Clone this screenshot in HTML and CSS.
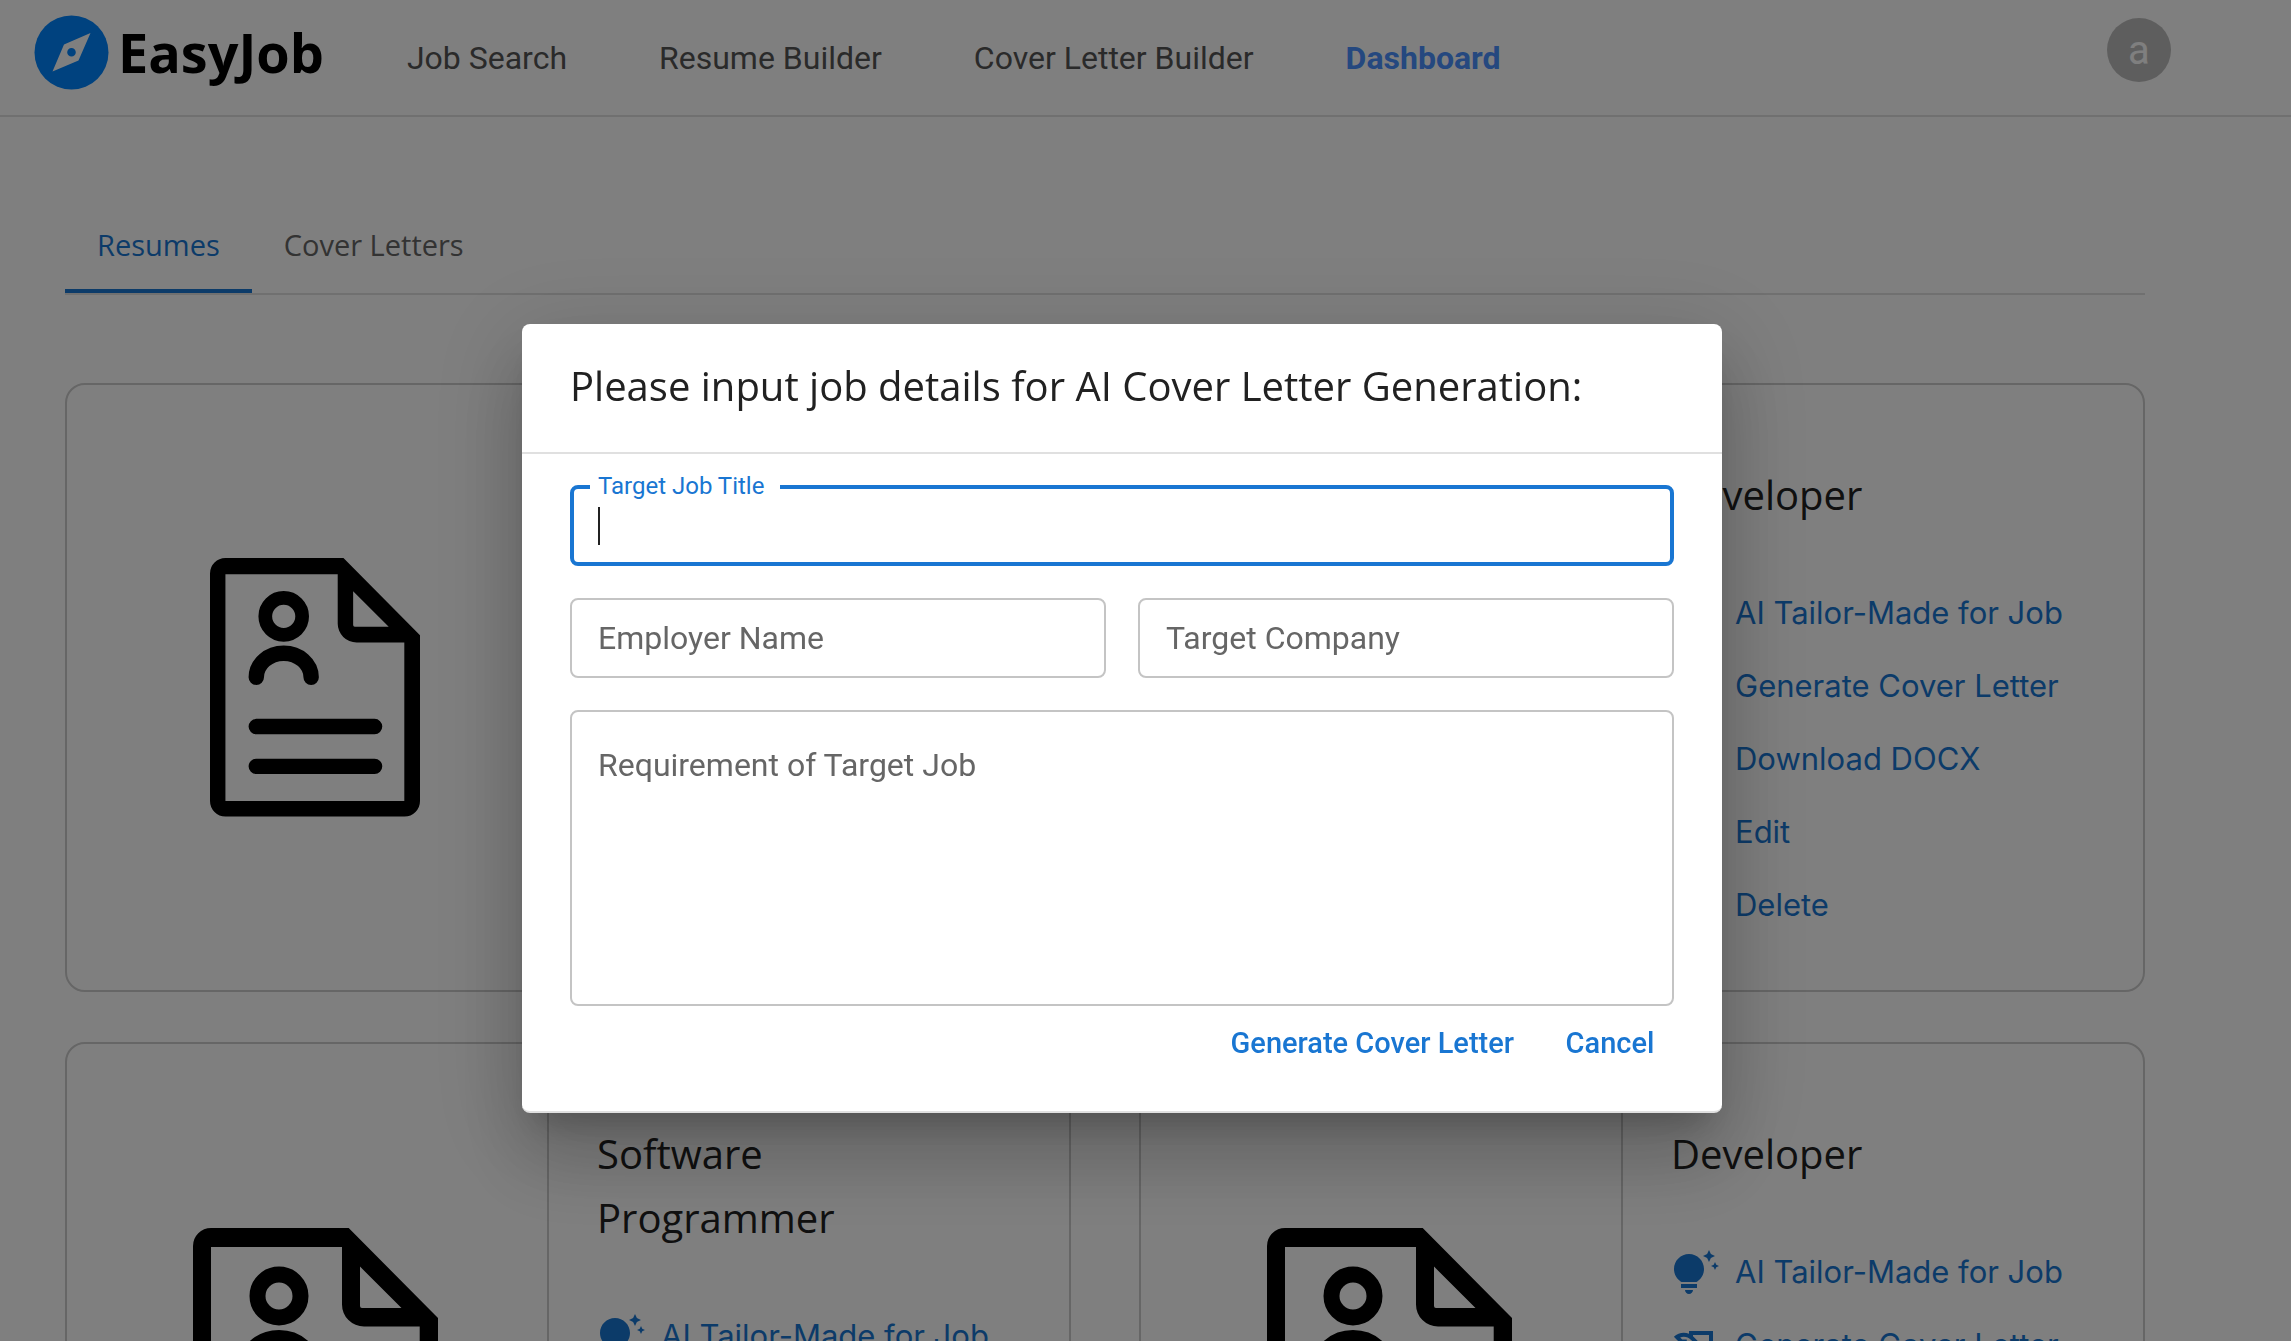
FILE: index.html
```html
<!DOCTYPE html>
<html lang="en">
<head>
  <meta charset="utf-8">
  <title>EasyJob - Dashboard</title>
  <link rel="stylesheet" href="styles.css">
</head>
<body>
  <svg class="sprite" aria-hidden="true">
    <symbol id="resume" viewBox="0 0 245 302">
      <path fill-rule="evenodd" d="M18 0H155.700L245 90V283.500A18 18 0 0 1 227 301.500H18A18 18 0 0 1 0 283.500V18A18 18 0 0 1 18 0ZM18 19V283.500H226.700V98.500H171A22 22 0 0 1 149 76.500V19ZM167 38.600V78Q167 80 169 80H208.500Z"/>
      <g fill="none" stroke="#000" stroke-linecap="round">
        <circle cx="86" cy="68" r="21.500" stroke-width="16"/>
        <path stroke-width="18" d="M54 139A32 28 0 0 1 118 139M54 196.600H192M54 243H192"/>
      </g>
    </symbol>
    <symbol id="tips" viewBox="0 0 24 24"><path d="M7 20h4c0 1.100-.9 2-2 2s-2-.9-2-2zm-2-1h8v-2H5v2zm11.500-9.500c0 3.820-2.660 5.860-3.770 6.500H5.270c-1.110-.64-3.770-2.680-3.770-6.500C1.500 5.360 4.860 2 9 2s7.500 3.360 7.500 7.500zm4.870-2.130L20 8l1.370.63L22 10l.63-1.370L24 8l-1.370-.63L22 6l-.63 1.370zM19 6l.94-2.060L22 3l-2.060-.94L19 0l-.94 2.060L16 3l2.060.94L19 6z"/></symbol>
    <symbol id="letter" viewBox="0 0 24 24"><path d="M9 4v1.380c-.83-.33-1.720-.5-2.610-.5-1.790 0-3.580.68-4.950 2.050l3.330 3.330h1.110v1.110c.86.86 1.980 1.310 3.110 1.360V15H6v3c0 1.100.9 2 2 2h10c1.660 0 3-1.340 3-3V4H9zm-1.110 6.410V8.260H5.610L4.570 7.220a5.070 5.070 0 0 1 1.820-.34c1.340 0 2.590.52 3.540 1.460l1.410 1.410-.2.2c-.51.51-1.190.8-1.920.8-.47 0-.93-.12-1.330-.34zM19 17c0 .55-.45 1-1 1s-1-.45-1-1v-2h-6v-2.590c.57-.23 1.100-.57 1.560-1.030l.2-.2L15.590 14H17v-1.410l-6-5.970V6h8v11z"/></symbol>
    <symbol id="download" viewBox="0 0 24 24"><path d="M19 9h-4V3H9v6H5l7 7 7-7zM5 18v2h14v-2H5z"/></symbol>
    <symbol id="edit" viewBox="0 0 24 24"><path d="M3 17.250V21h3.750L17.810 9.940l-3.750-3.750L3 17.250zM20.710 7.040c.39-.39.39-1.020 0-1.410l-2.340-2.340a1 1 0 0 0-1.410 0l-1.830 1.830 3.750 3.750 1.830-1.830z"/></symbol>
    <symbol id="delete" viewBox="0 0 24 24"><path d="M6 19c0 1.100.9 2 2 2h8c1.100 0 2-.9 2-2V7H6v12zM19 4h-3.500l-1-1h-5l-1 1H5v2h14V4z"/></symbol>
  </svg>

  <header class="header">
    <a class="logo" href="#">
      <svg class="logo-mark" viewBox="34 15 74 75" aria-hidden="true">
        <circle cx="71" cy="52.500" r="37" fill="#0084ff"/>
        <path fill="#fff" fill-rule="evenodd" d="M90 33 78 60.500 52 71.500 63.500 44.500ZM71 48A4.300 4.300 0 1 0 71 56.600 4.300 4.300 0 1 0 71 48Z"/>
      </svg>
      <span>EasyJob</span>
    </a>
    <nav class="nav">
      <a href="#">Job Search</a>
      <a href="#">Resume Builder</a>
      <a href="#">Cover Letter Builder</a>
      <a class="active" href="#">Dashboard</a>
    </nav>
    <button class="avatar" type="button">a</button>
  </header>

  <main class="main">
    <div class="tabs" role="tablist">
      <button class="tab selected" type="button" role="tab" aria-selected="true">Resumes</button>
      <button class="tab" type="button" role="tab" aria-selected="false">Cover Letters</button>
    </div>

    <div class="cards">
      <article class="card">
        <div class="card-art"><svg class="art" aria-hidden="true"><use href="#resume"/></svg></div>
        <div class="card-body">
          <h2 class="title">Developer</h2>
          <ul class="actions">
            <li><a href="#"><svg><use href="#tips"/></svg><span>AI Tailor-Made for Job</span></a></li>
            <li><a href="#"><svg><use href="#letter"/></svg><span>Generate Cover Letter</span></a></li>
            <li><a href="#"><svg><use href="#download"/></svg><span>Download DOCX</span></a></li>
            <li><a href="#"><svg><use href="#edit"/></svg><span>Edit</span></a></li>
            <li><a href="#"><svg><use href="#delete"/></svg><span>Delete</span></a></li>
          </ul>
        </div>
      </article>
      <article class="card">
        <div class="card-art"><svg class="art" aria-hidden="true"><use href="#resume"/></svg></div>
        <div class="card-body">
          <h2 class="title">Developer</h2>
          <ul class="actions">
            <li><a href="#"><svg><use href="#tips"/></svg><span>AI Tailor-Made for Job</span></a></li>
            <li><a href="#"><svg><use href="#letter"/></svg><span>Generate Cover Letter</span></a></li>
            <li><a href="#"><svg><use href="#download"/></svg><span>Download DOCX</span></a></li>
            <li><a href="#"><svg><use href="#edit"/></svg><span>Edit</span></a></li>
            <li><a href="#"><svg><use href="#delete"/></svg><span>Delete</span></a></li>
          </ul>
        </div>
      </article>
      <article class="card">
        <div class="card-art"><svg class="art art-large" aria-hidden="true"><use href="#resume"/></svg></div>
        <div class="card-body">
          <h2 class="title">Software<br>Programmer</h2>
          <ul class="actions">
            <li><a href="#"><svg><use href="#tips"/></svg><span>AI Tailor-Made for Job</span></a></li>
            <li><a href="#"><svg><use href="#letter"/></svg><span>Generate Cover Letter</span></a></li>
            <li><a href="#"><svg><use href="#download"/></svg><span>Download DOCX</span></a></li>
            <li><a href="#"><svg><use href="#edit"/></svg><span>Edit</span></a></li>
            <li><a href="#"><svg><use href="#delete"/></svg><span>Delete</span></a></li>
          </ul>
        </div>
      </article>
      <article class="card">
        <div class="card-art"><svg class="art art-large" aria-hidden="true"><use href="#resume"/></svg></div>
        <div class="card-body">
          <h2 class="title">Developer</h2>
          <ul class="actions">
            <li><a href="#"><svg><use href="#tips"/></svg><span>AI Tailor-Made for Job</span></a></li>
            <li><a href="#"><svg><use href="#letter"/></svg><span>Generate Cover Letter</span></a></li>
            <li><a href="#"><svg><use href="#download"/></svg><span>Download DOCX</span></a></li>
            <li><a href="#"><svg><use href="#edit"/></svg><span>Edit</span></a></li>
            <li><a href="#"><svg><use href="#delete"/></svg><span>Delete</span></a></li>
          </ul>
        </div>
      </article>
    </div>
  </main>

  <div class="backdrop">
    <form class="dialog" role="dialog" aria-modal="true" aria-labelledby="dialog-title">
      <h2 class="title dialog-title" id="dialog-title">Please input job details for AI Cover Letter Generation:</h2>
      <div class="dialog-content">
        <div class="fields">
          <div class="field focused wide">
            <input id="job-title" type="text">
            <label for="job-title">Target Job Title</label>
            <span class="caret"></span>
          </div>
          <div class="field">
            <input id="employer" type="text">
            <label for="employer">Employer Name</label>
          </div>
          <div class="field">
            <input id="company" type="text">
            <label for="company">Target Company</label>
          </div>
          <div class="field area wide">
            <textarea id="requirement"></textarea>
            <label for="requirement">Requirement of Target Job</label>
          </div>
        </div>
        <div class="dialog-actions">
          <button type="button">Generate Cover Letter</button>
          <button type="button">Cancel</button>
        </div>
      </div>
    </form>
  </div>
</body>
</html>
```
FILE: styles.css
```css
* {
  box-sizing: border-box;
}

html,
body {
  height: 100%;
}

body {
  margin: 0;
  overflow: hidden;
  background: #fff;
  color: #212121;
  font-family: Roboto, sans-serif;
  font-size: 32px;
}

button {
  border: 0;
  padding: 0;
  background: none;
  font-family: inherit;
}

a {
  text-decoration: none;
}

.sprite {
  display: none;
}

/* Header */
.header {
  display: flex;
  align-items: center;
  height: 117px;
  padding: 0 120px 0 34px;
  border-bottom: 2px solid #e0e0e0;
}

.logo {
  display: flex;
  align-items: center;
  gap: 9px;
  padding-bottom: 11px;
  color: #000;
  font: 700 54px "Open Sans", sans-serif;
}

.logo-mark {
  width: 75px;
  height: 75px;
}

.nav {
  display: flex;
  gap: 92px;
  margin-left: 83px;
}

.nav a {
  color: #555;
}

.nav .active {
  color: #4a90ff;
  font-weight: 700;
}

.avatar {
  width: 64px;
  height: 64px;
  margin: 0 0 15px auto;
  border-radius: 50%;
  background: #bdbdbd;
  color: #fff;
  font-size: 40px;
}

/* Dashboard */
.main {
  padding: 80px 146px 0 65px;
}

.tabs {
  display: flex;
  margin-bottom: 88px;
  border-bottom: 2px solid #e0e0e0;
}

.tab {
  height: 96px;
  padding: 0 32px 2px;
  color: #666;
  font: 400 29px "Open Sans", sans-serif;
}

.tab.selected {
  color: #1976d2;
  box-shadow: inset 0 -4px #1976d2;
}

.cards {
  display: grid;
  grid-template-columns: 1fr 1fr;
  gap: 50px 68px;
}

.card {
  display: grid;
  grid-template-columns: 480fr 522fr;
  border: 2px solid #ccc;
  border-radius: 20px;
}

.card-art {
  display: flex;
  align-items: center;
  justify-content: center;
  padding-left: 16px;
}

.art {
  width: 210px;
  height: 259px;
}

.art-large {
  width: 245px;
  height: 302px;
}

.card-body {
  padding: 78px 48px 47px;
  border-left: 2px solid #ccc;
}

.title {
  margin: 0;
  font: 400 40px/64px "Open Sans", sans-serif;
}

.actions {
  margin: 51px 0 0;
  padding: 0;
  list-style: none;
}

.actions a {
  display: flex;
  align-items: center;
  gap: 16px;
  height: 73px;
  color: #1976d2;
  font: 400 31px Inter, sans-serif;
}

.actions span {
  padding-bottom: 4px;
}

.actions svg {
  width: 48px;
  height: 48px;
  fill: currentColor;
}

/* Dialog */
.backdrop {
  position: fixed;
  inset: 0;
  display: flex;
  align-items: flex-start;
  justify-content: center;
  padding: 324px 47px 0 0;
  background: rgba(0, 0, 0, 0.5);
}

.dialog {
  width: 1200px;
  border-radius: 8px;
  border-bottom: 2px solid #e0e0e0;
  background: #fff;
  box-shadow:
    0 22px 30px -14px rgba(0, 0, 0, 0.2),
    0 48px 76px 6px rgba(0, 0, 0, 0.14),
    0 18px 92px 16px rgba(0, 0, 0, 0.12);
}

.dialog-title {
  padding: 30px 48px 34px;
  border-bottom: 2px solid #e0e0e0;
}

.dialog-content {
  padding: 31px 48px 32px;
}

.fields {
  display: grid;
  grid-template-columns: 1fr 1fr;
  gap: 32px;
}

.wide {
  grid-column: 1 / -1;
}

/* The label shares the control's grid cell and rests inside it */
.field {
  position: relative;
  display: grid;
  align-items: center;
  height: 80px;
}

.field > input,
.field > textarea,
.field > label {
  grid-area: 1 / 1;
}

.field > input,
.field > textarea {
  width: 100%;
  height: 100%;
  padding: 0 28px;
  border: 2px solid #c4c4c4;
  border-radius: 8px;
  outline: 0;
  background: #fff;
  font: 400 32px Roboto, sans-serif;
  resize: none;
}

.field > label {
  justify-self: start;
  padding: 0 28px;
  color: #666;
  pointer-events: none;
}

.area {
  height: 296px;
  align-items: start;
}

.area > label {
  padding-top: 36px;
}

.focused {
  height: 81px;
}

.focused > input {
  border: 4px solid #1976d2;
}

.focused > label {
  position: absolute;
  top: -13px;
  left: 20px;
  padding: 0 16px 0 8px;
  background: #fff;
  color: #1976d2;
  font-size: 24px;
  line-height: 28px;
}

.caret {
  position: absolute;
  top: 22px;
  left: 28px;
  width: 2px;
  height: 38px;
  background: #212121;
}

.dialog-actions {
  display: flex;
  justify-content: flex-end;
  gap: 16px;
}

.dialog-actions button {
  min-width: 128px;
  height: 73px;
  padding: 0 16px;
  color: #1976d2;
  font-size: 29px;
  font-weight: 500;
}
```
